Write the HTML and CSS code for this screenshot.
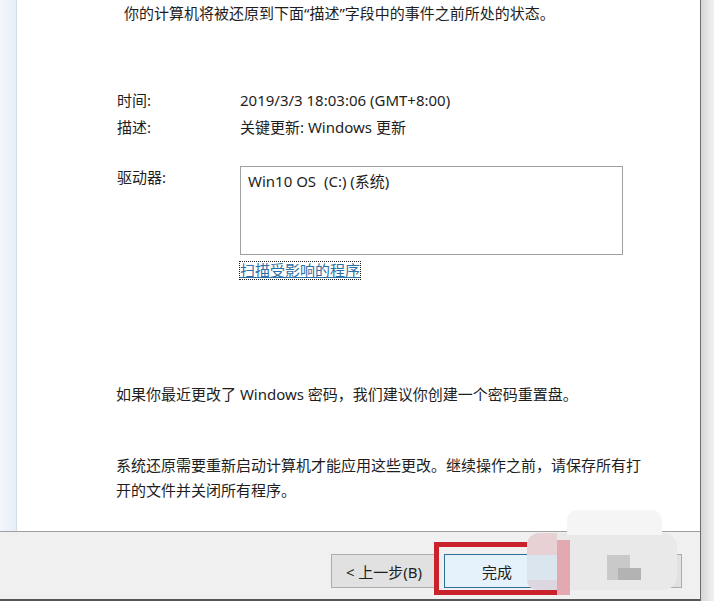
FILE: index.html
```html
<!DOCTYPE html>
<html lang="zh-CN">
<head>
  <meta charset="UTF-8">
  <meta name="viewport" content="width=device-width, initial-scale=1.0">
  <title>系统还原</title>
  <link rel="stylesheet" href="styles.css">
</head>
<body>
  <div class="window">
    <div class="main">
      <div class="content">
        <div class="sidebar"></div>

        <div class="panel">
          <p class="intro">你的计算机将被还原到下面“描述”字段中的事件之前所处的状态。</p>

          <!-- Restore point details -->
          <div class="details">
            <span class="label">时间:</span>
            <span class="value">2019/3/3 18:03:06 (GMT+8:00)</span>
            <span class="label">描述:</span>
            <span class="value">关键更新: Windows 更新</span>
            <span class="label drive-label">驱动器:</span>
            <div class="drive-cell">
              <div class="drive-box">Win10 OS&nbsp; (C:) (系统)</div>
              <a class="scan-link" href="#">扫描受影响的程序</a>
            </div>
          </div>

          <p class="note">如果你最近更改了 Windows 密码，我们建议你创建一个密码重置盘。</p>
          <p class="note restart">系统还原需要重新启动计算机才能应用这些更改。继续操作之前，请保存所有打开的文件并关闭所有程序。</p>
        </div>
      </div>

      <!-- Wizard buttons -->
      <div class="footer">
        <button class="btn">&lt; 上一步(B)</button>
        <button class="btn btn-primary">完成</button>
        <button class="btn btn-cancel">取消</button>
      </div>
    </div>
    <div class="edge"></div>

    <!-- Annotation and blurred area on top of the screenshot -->
    <div class="highlight"></div>
    <div class="mosaic">
      <div class="m-base"></div>
      <div class="m-top"></div>
      <div class="m-pink"></div>
      <div class="m-strip"></div>
      <div class="m-blue"></div>
      <div class="m-lilac"></div>
      <div class="m-gray"></div>
      <div class="m-dark"></div>
    </div>
  </div>
</body>
</html>
```

FILE: styles.css
```css
body {
  margin: 0;
  padding: 0;
  width: 714px;
  height: 601px;
  overflow: hidden;
  background-color: #ffffff;
  font-family: "Noto Sans", "Noto Sans CJK SC", sans-serif;
  font-size: 15px;
  color: #1e1e1e;
}

.window {
  position: relative;
  display: flex;
  height: 601px;
}

.main {
  flex: 1;
  display: flex;
  flex-direction: column;
}

.content {
  display: flex;
  flex-shrink: 0;
  height: 531px;
  background-color: #ffffff;
}

.sidebar {
  width: 16px;
  background: linear-gradient(to right, #f3f7fc, #e6eef7);
  border-right: 1px solid #d3dde9;
}

.panel {
  flex: 1;
  padding: 3px 0 0 100px;
  line-height: 20px;
}

.intro {
  margin: 0 0 0 7px;
}

.details {
  display: grid;
  grid-template-columns: 123px 1fr;
  row-gap: 7px;
  margin-top: 67px;
}

.drive-label,
.drive-cell {
  margin-top: 22px;
}

.drive-label {
  padding-top: 1px;
}

.drive-box {
  width: 383px;
  height: 89px;
  box-sizing: border-box;
  border: 1px solid #a0a0a0;
  padding: 4px 7px;
}

.scan-link {
  display: inline-block;
  margin-top: 7px;
  line-height: 17px;
  color: #2b6fa6;
  text-decoration: underline;
  outline: 1px dotted #222222;
}

.note {
  margin: 104px 0 0 -1px;
  width: 530px;
}

.note.restart {
  margin-top: 49px;
  line-height: 25px;
}

.footer {
  display: flex;
  flex-shrink: 0;
  justify-content: flex-end;
  align-items: flex-start;
  height: 45px;
  padding: 22px 18px 0 0;
  background-color: #f0f0f0;
  border-top: 1px solid #a0a0a0;
  border-bottom: 2px solid #555555;
}

.btn {
  width: 106px;
  height: 34px;
  margin-left: 7px;
  background-color: #e1e1e1;
  border: 1px solid #adadad;
  font-family: inherit;
  font-size: 15px;
  color: #1e1e1e;
}

.btn-primary {
  background-color: #e5f1fb;
  border-color: #2f6f95;
}

.btn-cancel {
  margin-left: 26px;
}

.edge {
  width: 13px;
  border-left: 1px solid #6d6d6d;
  background: linear-gradient(to right, #d6d6d6, #f2f2f2);
}

.highlight {
  position: absolute;
  left: 434px;
  top: 542px;
  width: 133px;
  height: 53px;
  box-sizing: border-box;
  border: 5px solid #c9222c;
}

.mosaic {
  position: absolute;
  left: 527px;
  top: 500px;
  width: 152px;
  height: 96px;
}

.mosaic div {
  position: absolute;
}

.m-base {
  left: 0;
  top: 33px;
  width: 150px;
  height: 57px;
  background-color: #e9e9e9;
  border-radius: 14px;
}

.m-top {
  left: 40px;
  top: 10px;
  width: 95px;
  height: 25px;
  background-color: #f5f5f5;
  border-radius: 10px 10px 0 0;
}

.m-pink {
  left: 0;
  top: 33px;
  width: 30px;
  height: 22px;
  background-color: #e7d1d5;
  border-radius: 12px 0 0 0;
}

.m-strip {
  left: 30px;
  top: 40px;
  width: 13px;
  height: 55px;
  background-color: #e2a9b1;
}

.m-blue {
  left: 0;
  top: 55px;
  width: 30px;
  height: 25px;
  background-color: #dae5ee;
}

.m-lilac {
  left: 0;
  top: 80px;
  width: 30px;
  height: 10px;
  background-color: #dcd6e0;
  border-radius: 0 0 0 10px;
}

.m-gray {
  left: 80px;
  top: 55px;
  width: 23px;
  height: 25px;
  background-color: #c9c9c9;
}

.m-dark {
  left: 91px;
  top: 68px;
  width: 23px;
  height: 12px;
  background-color: #b3b3b3;
}
```
